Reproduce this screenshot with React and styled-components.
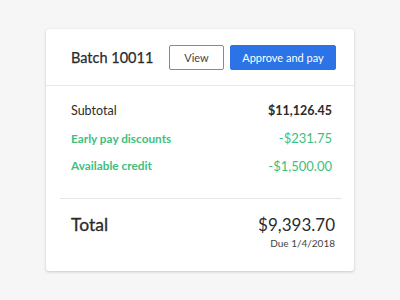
import React from "react";
import styled, { createGlobalStyle } from "styled-components";

const GlobalStyle = createGlobalStyle`
  html, body {
    margin: 0;
    padding: 0;
    background: #f6f6f6;
    font-family: Lato, "Open Sans", sans-serif;
    color: #2b2b2b;
  }
`;

const Page = styled.div`
  width: 400px;
  height: 300px;
  padding-top: 29px;
  box-sizing: border-box;
`;

const Card = styled.div`
  margin-left: 46px;
  width: 308px;
  height: 242px;
  background: #fff;
  border-radius: 3px;
  box-shadow: 0 1px 3px rgba(0, 0, 0, 0.18), 0 0 1px rgba(0, 0, 0, 0.08);
  display: flex;
  flex-direction: column;
`;

const Header = styled.div`
  height: 56px;
  display: flex;
  align-items: center;
  padding: 0 18px 0 25px;
  border-bottom: 1px solid #e8e8e8;
`;

const Title = styled.div`
  flex: 1;
  font-size: 14.5px;
  color: #2b2b2b;
  -webkit-text-stroke: 0.25px #2b2b2b;
`;

const Button = styled.button`
  height: 25px;
  padding: 0;
  width: ${(p) => p.$w}px;
  margin-left: ${(p) => p.$ml || 0}px;
  border-radius: 2px;
  font-family: inherit;
  font-size: 11px;
  cursor: pointer;
  border: 1px solid ${(p) => (p.$primary ? "#2b73e6" : "#8a8a8a")};
  background: ${(p) => (p.$primary ? "#2b73e6" : "#fff")};
  color: ${(p) => (p.$primary ? "#fff" : "#444")};
`;

const Lines = styled.div`
  display: flex;
  flex-direction: column;
  gap: 8px;
  padding: 15px 22px 0 25px;
  height: 112px;
  box-sizing: border-box;
`;

const Line = styled.div`
  display: flex;
  justify-content: space-between;
  align-items: center;
  height: 19.5px;
  font-size: ${(p) => (p.$green ? 11.8 : 12.5)}px;
  color: ${(p) => (p.$green ? "#3dc07e" : "#2b2b2b")};
  font-weight: ${(p) => (p.$green ? 700 : 400)};
`;

const Amount = styled.span`
  font-size: ${(p) => (p.$bold ? 12.5 : 13)}px;
  font-weight: ${(p) => (p.$bold ? 700 : 400)};
`;

const Divider = styled.div`
  margin: 0 12px 0 14px;
  border-top: 1px solid #e6e6e6;
`;

const TotalRow = styled.div`
  display: flex;
  justify-content: space-between;
  align-items: flex-start;
  padding: 14px 19px 0 25px;
`;

const TotalLabel = styled.div`
  font-size: 17.5px;
  margin-top: 1px;
  -webkit-text-stroke: 0.3px #2b2b2b;
`;

const TotalRight = styled.div`
  text-align: right;
`;

const TotalValue = styled.div`
  font-size: 17px;
  line-height: 24px;
`;

const Due = styled.div`
  font-size: 10px;
  color: #444;
  margin-top: 0;
`;

export default function App() {
  return (
    <>
      <GlobalStyle />
      <Page>
        <Card>
          <Header>
            <Title>Batch 10011</Title>
            <Button $w={55}>View</Button>
            <Button $primary $w={106} $ml={6}>
              Approve and pay
            </Button>
          </Header>
          <Lines>
            <Line>
              <span>Subtotal</span>
              <Amount $bold>$11,126.45</Amount>
            </Line>
            <Line $green>
              <span>Early pay discounts</span>
              <Amount>-$231.75</Amount>
            </Line>
            <Line $green>
              <span>Available credit</span>
              <Amount>-$1,500.00</Amount>
            </Line>
          </Lines>
          <Divider />
          <TotalRow>
            <TotalLabel>Total</TotalLabel>
            <TotalRight>
              <TotalValue>$9,393.70</TotalValue>
              <Due>Due 1/4/2018</Due>
            </TotalRight>
          </TotalRow>
        </Card>
      </Page>
    </>
  );
}
